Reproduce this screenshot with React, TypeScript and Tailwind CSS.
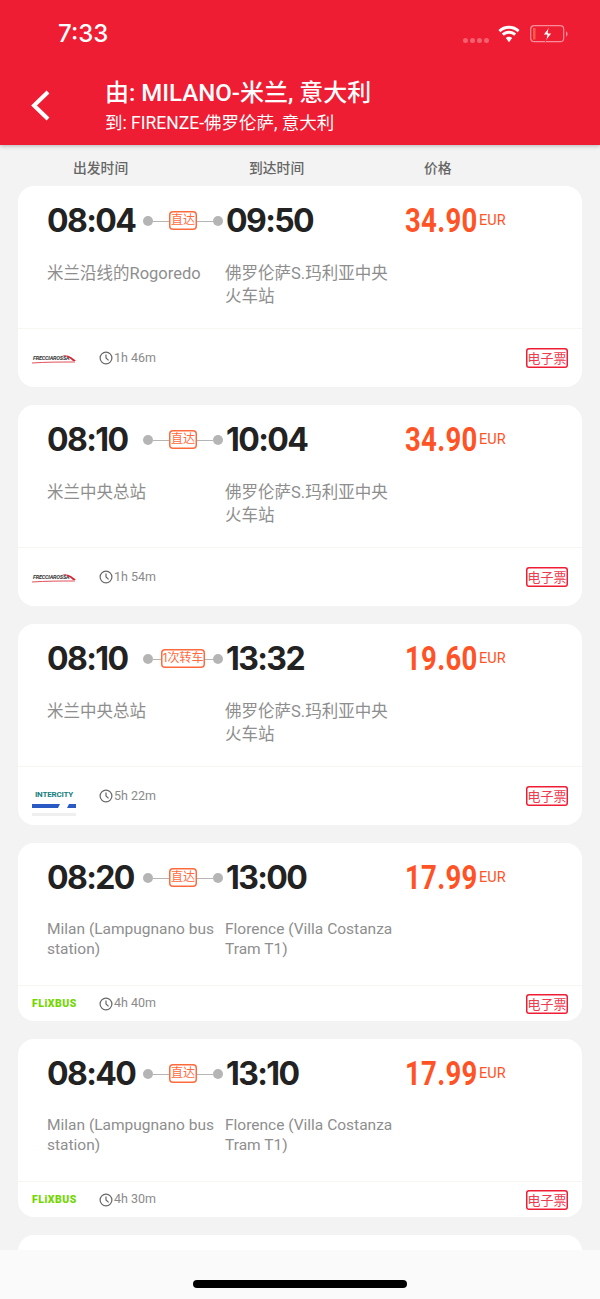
import React from "react";

const inter = "font-['Inter','Noto_Sans_CJK_SC',sans-serif]";
const roboto = "font-['Roboto','Noto_Sans_CJK_SC',sans-serif]";

const trains = [
  { dep: "08:04", arr: "09:50", tag: "直达", price: "34.90", from: "米兰沿线的Rogoredo", to: "佛罗伦萨S.玛利亚中央火车站", time: "1h 46m", logo: "frecciarossa" },
  { dep: "08:10", arr: "10:04", tag: "直达", price: "34.90", from: "米兰中央总站", to: "佛罗伦萨S.玛利亚中央火车站", time: "1h 54m", logo: "frecciarossa" },
  { dep: "08:10", arr: "13:32", tag: "1次转车", price: "19.60", from: "米兰中央总站", to: "佛罗伦萨S.玛利亚中央火车站", time: "5h 22m", logo: "intercity" },
  { dep: "08:20", arr: "13:00", tag: "直达", price: "17.99", from: "Milan (Lampugnano bus station)", to: "Florence (Villa Costanza Tram T1)", time: "4h 40m", logo: "flixbus" },
  { dep: "08:40", arr: "13:10", tag: "直达", price: "17.99", from: "Milan (Lampugnano bus station)", to: "Florence (Villa Costanza Tram T1)", time: "4h 30m", logo: "flixbus" },
];

const Logo = ({ name }: { name: string }) => {
  if (name === "intercity") {
    return (
      <div className="w-[44px] flex flex-col items-center mt-[13px]">
        <span className="font-['Roboto',sans-serif] text-[8px] leading-[9px] font-bold text-[#17807e] tracking-[-0.2px]">INTERCITY</span>
        <svg width="44" height="14" viewBox="0 0 44 14" className="mt-[3px]">
          <path d="M0 2h28l-2 4H0z M37 2h7v4h-9z" fill="#2a5bc4" />
          <rect y="11" width="44" height="3" fill="#efefef" />
        </svg>
      </div>
    );
  }
  if (name === "flixbus") {
    return (
      <div className="w-[44px] font-['Roboto',sans-serif] text-[10.5px] leading-[12px] font-black text-[#73d700] tracking-[0.5px] whitespace-nowrap">
        FLiXBUS
      </div>
    );
  }
  return (
    <div className="w-[44px] relative h-[10px] mt-[2px]">
      <span className="absolute left-[1px] top-0 font-['Roboto',sans-serif] italic text-[5.5px] leading-[9px] font-bold text-[#333] tracking-[-0.2px] whitespace-nowrap">
        FRECCIAROSSA
      </span>
      <svg width="44" height="10" viewBox="0 0 44 10" className="absolute left-0 top-0">
        <path d="M30 1c6 0 10 2 14 6l-3 0c-3-3-6-5-11-6z" fill="#d9232e" />
        <path d="M0 9c14-1 28-1 43-1" stroke="#d9232e" strokeWidth="0.8" fill="none" />
      </svg>
    </div>
  );
};

const Card = ({ t }: { t: (typeof trains)[number] }) => (
  <div className={`bg-white rounded-[16px] ${inter}`}>
    <div className="pl-[29px] pt-[15px] flex flex-col border-b border-[#f7f7f2]">
      <div className="flex items-center h-[40px]">
        <div className="w-[96px] text-[32px] leading-[40px] font-bold text-[#222222] tracking-[-1.6px] whitespace-nowrap">{t.dep}</div>
        <div className="w-[80px] flex items-center justify-center shrink-0">
          <span className="size-[10px] rounded-full bg-[#b5b5b5] shrink-0" />
          <span className="flex-1 h-px bg-[#b5b5b5]" />
          <span className="shadow-[inset_0_0_0_1.5px_#ff6a3c] rounded-[4px] text-[#ff6a3c] text-[12px] leading-[18px] px-[2px] h-[19px] whitespace-nowrap -mt-[2px]">{t.tag}</span>
          <span className="flex-1 h-px bg-[#b5b5b5]" />
          <span className="size-[10px] rounded-full bg-[#b5b5b5] shrink-0" />
        </div>
        <div className="w-[179px] ml-[3px] text-[32px] leading-[40px] font-bold text-[#222222] tracking-[-1.6px] whitespace-nowrap">{t.arr}</div>
        <div className="font-['Roboto',sans-serif] text-[27.5px] leading-[40px] font-bold text-[#ff5326] tracking-[0.3px] scale-y-[1.18] w-[74px] whitespace-nowrap">{t.price}</div>
        <div className="font-['Roboto',sans-serif] text-[14.5px] leading-[16px] text-[#ff5326]">EUR</div>
      </div>
      <div className={`flex mt-[21px] h-[66px] text-[#8e8e8e] ${roboto} ${t.logo === "flixbus" ? "text-[15.5px] leading-[20px]" : "text-[16.5px] leading-[23px]"}`}>
        <div className="w-[178px] pr-[2px]">{t.from}</div>
        <div className="w-[172px]">{t.to}</div>
      </div>
    </div>
    <div className={`flex items-center pl-[14px] pr-[14px] ${t.logo === "flixbus" ? "h-[35px]" : "h-[58px]"}`}>
      <Logo name={t.logo} />
      <div className={`ml-[23px] flex items-center gap-[1px] text-[12.5px] text-[#8a8a8a] ${roboto}`}>
        <svg width="14" height="14" viewBox="0 0 14 14" fill="none" stroke="#666" strokeWidth="1.2">
          <circle cx="7" cy="7" r="5.9" />
          <path d="M7 3.4V7l2.6 2.4" />
        </svg>
        {t.time}
      </div>
      <div className="ml-auto shadow-[inset_0_0_0_1.5px_#ee1d33] rounded-[3px] h-[20px] w-[42px] text-[13px] leading-[20px] text-[#ee3a4c] text-center whitespace-nowrap">电子票</div>
    </div>
  </div>
);

export default function App() {
  return (
    <div className={`w-[600px] h-[1299px] bg-[#f3f3f3] flex flex-col overflow-hidden ${inter}`}>
      {/* Header */}
      <div className="h-[145px] bg-[#ee1d33] shrink-0 text-white shadow-[0_1px_4px_rgba(0,0,0,0.25)] z-10 flex flex-col">
        <div className="h-[66px] flex items-center pl-[58px] pr-[32px] pt-[1px]">
          <span className="text-[24px] font-medium leading-[28px]">7:33</span>
          <div className="ml-auto flex items-center">
            <div className="flex gap-[2px] mt-[13px] mr-[8px]">
              {[0, 1, 2, 3].map((i) => (
                <span key={i} className="size-[5px] rounded-full bg-white/30" />
              ))}
            </div>
            <svg width="24" height="18" viewBox="0 0 22 17" fill="white" className="mr-[9px]">
              <path d="M11 3.6c3.2 0 6 1.2 8.1 3.2L21 4.8C18.4 2.2 14.900.8 11 .8S3.600 2.200 1 4.800l1.900 2C5 4.800 7.800 3.600 11 3.600z" />
              <path d="M11 8.200c1.900 0 3.600.7 4.900 1.900l1.900-2C16 6.400 13.600 5.400 11 5.400S6 6.400 4.200 8.100l1.900 2c1.300-1.200 3-1.900 4.900-1.900z" />
              <path d="M11 11c-1.200 0-2.200.4-3 1.200l3 4 3-4c-.8-.8-1.800-1.200-3-1.200z" />
            </svg>
            <svg width="38" height="18" viewBox="0 0 38 18" fill="none">
              <rect x="0.700" y="0.700" width="33" height="16" rx="3.500" stroke="white" strokeOpacity="0.5" strokeWidth="1.200" />
              <rect x="3" y="3" width="2.500" height="11.500" fill="#ff5a4a" />
              <path d="M36 6.500c1 .3 1.500 1.200 1.500 2.500s-.5 2.200-1.500 2.500z" fill="white" fillOpacity="0.5" />
              <path d="M19.500 1.500 13 10h4l-1.500 6.500L22 8h-4z" fill="white" stroke="#ee1d33" strokeWidth="1" />
            </svg>
          </div>
        </div>
        <div className="flex items-start">
          <svg width="24" height="32" viewBox="0 0 24 32" fill="none" stroke="white" strokeWidth="4" className="ml-[29px] mt-[24px] shrink-0">
            <path d="M19 3 5 16.500 19 30" transform="translate(0 -1)" />
          </svg>
          <div className={`ml-[52px] text-white ${roboto}`}>
            <div className="text-[24px] leading-[30px] font-medium mt-[12px] whitespace-nowrap">由: MILANO-米兰, 意大利</div>
            <div className="text-[17.5px] leading-[22px] mt-[4px] whitespace-nowrap">到: FIRENZE-佛罗伦萨, 意大利</div>
          </div>
        </div>
      </div>

      {/* Column titles */}
      <div className="h-[41px] pt-[6px] shrink-0 flex items-center pl-[73px] text-[13.8px] text-[#666666] font-medium">
        <span className="w-[176px]">出发时间</span>
        <span className="w-[175px]">到达时间</span>
        <span>价格</span>
      </div>

      {/* Results */}
      <div className="flex-1 min-h-0 overflow-hidden px-[18px] flex flex-col gap-[18px]">
        {trains.map((t, i) => (
          <Card key={i} t={t} />
        ))}
        <div className="bg-white rounded-t-[16px] h-[40px] shrink-0" />
      </div>

      {/* Home indicator */}
      <div className="h-[49px] shrink-0 bg-[#fafafa] flex justify-center pt-[30px] z-10">
        <div className="w-[214px] h-[8px] rounded-full bg-black" />
      </div>
    </div>
  );
}
